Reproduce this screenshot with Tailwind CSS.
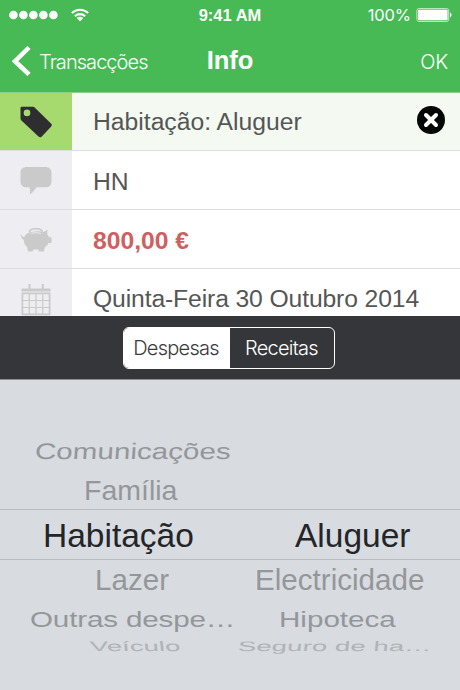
<!DOCTYPE html>
<html lang="pt">
<head>
    <meta charset="UTF-8">
    <meta name="viewport" content="width=device-width, initial-scale=1.0">
    <title>Info</title>
    <script src="https://cdn.jsdelivr.net/npm/@tailwindcss/browser@4"></script>
</head>
<body class="w-[460px] h-[690px] overflow-hidden flex flex-col bg-[#d8dbe0] font-['Liberation_Sans',Arial,sans-serif] whitespace-nowrap">

    <!-- Header -->
    <header class="h-[93px] shrink-0 bg-[#47ba55] border-b border-[#8fd088] text-white">
        <!-- Status bar -->
        <div class="h-[30px] grid grid-cols-3 items-center">
            <div class="flex items-center pl-[9px]">
                <svg class="w-[49px] h-[10px]" viewBox="0 0 49 10" fill="currentColor">
                    <circle cx="4.4" cy="5" r="4.3"/>
                    <circle cx="14.4" cy="5" r="4.3"/>
                    <circle cx="24.4" cy="5" r="4.3"/>
                    <circle cx="34.4" cy="5" r="4.3"/>
                    <circle cx="44.4" cy="5" r="4.3"/>
                </svg>
                <svg class="w-[18px] h-[14px] ml-[13px]" viewBox="0 0 18 14" fill="none" stroke="currentColor" stroke-width="2.1">
                    <path d="M.9 5.1a11.5 11.5 0 0 1 16.2 0M3.9 8.2a7.2 7.2 0 0 1 10.2 0"/>
                    <path d="M5.8 10.1a4.6 4.6 0 0 1 6.4 0L9 13.4z" fill="currentColor" stroke="none"/>
                </svg>
            </div>
            <div class="text-center text-[16.5px] font-bold">9:41 AM</div>
            <div class="flex items-center justify-end pr-[8px]">
                <span class="font-['Inter',sans-serif] text-[16.5px] tracking-[-0.1px]">100%</span>
                <svg class="w-[36px] h-[14px] ml-[5px]" viewBox="0 0 36 14">
                    <rect x=".9" y=".6" width="31.8" height="12.8" rx="2" fill="none" stroke="#c5ecc8" stroke-width="1"/>
                    <rect x="2" y="1.7" width="29.6" height="10.6" rx="1" fill="#fff"/>
                    <path d="M34 4.6c2 .8 2 4 0 4.8z" fill="#fff"/>
                </svg>
            </div>
        </div>
        <!-- Navigation bar -->
        <div class="h-[62px] grid grid-cols-3 items-center">
            <div class="flex items-center pl-[12px]">
                <svg class="w-[19px] h-[30px]" viewBox="0 0 19 30" fill="none" stroke="currentColor" stroke-width="4.5">
                    <path d="M17 1.5 3 15.2l14 13.3"/>
                </svg>
                <span class="ml-[8px] mt-[2px] font-['Inter',sans-serif] font-light text-[20px] tracking-[-0.95px]">Transacções</span>
            </div>
            <h1 class="-mt-[2px] text-center text-[25.5px] font-bold">Info</h1>
            <div class="pr-[12px] mt-[2px] text-right font-['Inter',sans-serif] font-light text-[20px] tracking-[-0.2px]">OK</div>
        </div>
    </header>

    <!-- Transaction fields -->
    <main class="h-[223px] shrink-0 overflow-hidden bg-white text-[24.7px] text-[#555656]">
        <div class="h-[58px] flex items-center bg-[#f4faf1] border-b border-[#dbe0d8]">
            <div class="w-[72px] h-full flex items-center justify-center bg-[#a6da6e]">
                <svg class="w-[32px] h-[32px]" viewBox="0 0 32 32" fill="#2e2e30">
                    <path fill-rule="evenodd" d="M2 .8h10.5c1 0 1.7.2 2.4.9l16.100 15.800c1.100 1.100 1.100 2.100 0 3.200l-9.200 9.800c-1 1.100-2.200 1.100-3.300.1L1.400 14.400C.8 13.800.5 13.200.5 12.300V2.200C.5 1.200 1 .8 2 .8zM7 3.600a3.300 3.300 0 1 0 0 6.600 3.300 3.300 0 0 0 0-6.600z"/>
                </svg>
            </div>
            <span class="ml-[21px] grow">Habitação: Aluguer</span>
            <svg class="w-[28px] h-[28px] mr-[15px] -mt-[3px]" viewBox="0 0 28 28">
                <circle cx="14" cy="14" r="14" fill="#050705"/>
                <path d="M9 9 19 19M19 9 9 19" stroke="#fff" stroke-width="4" stroke-linecap="round"/>
            </svg>
        </div>
        <div class="h-[59px] flex items-center bg-white border-b border-[#dcdddf]">
            <div class="w-[72px] h-full flex items-center justify-center bg-[#eeedf2]">
                <svg class="w-[32px] h-[30px] mt-[2px]" viewBox="0 0 32 30" fill="#cacacb">
                    <path d="M6.5 1h19c3.6 0 6 2.2 6 5.5v9c0 3.6-2.4 5.8-6 5.8H16.5C14.5 24 12.500 26.500 9.800 28.600c.4-2.300.3-4.800-.4-7.300H6.500c-3.600 0-6-2.200-6-5.800v-9C.5 3.200 2.900 1 6.500 1z"/>
                </svg>
            </div>
            <span class="ml-[21px] mt-[3px]">HN</span>
        </div>
        <div class="h-[59px] flex items-center bg-white border-b border-[#dcdddf]">
            <div class="w-[72px] h-full flex items-center justify-center bg-[#eeedf2]">
                <svg class="w-[32px] h-[24px] mt-[2px]" viewBox="0 0 32 24" fill="#cacacb">
                    <path d="M9.500 4.200C9.500.2 20.500-.8 22.500 3.800" fill="none" stroke="#cacacb" stroke-width="1.700"/>
                    <path d="M7 5.800C10 3.200 19 2.600 23 4.200l4.500-2.400-.4 4.400c1 1 1.500 2 1.900 3.100h2.600v5.600h-3c-.9 1.900-2.200 3.300-3.900 4.400l-.7 4.300h-5l-.7-2.200h-4.900l-.7 2.200H8l-1-4.700C4.800 17 3.800 14.600 3.700 11.800 1.800 11 .7 8.800.4 5.800c1 1.900 2.100 3.100 3.700 3.400C4.700 7.900 5.700 6.700 7 5.800z"/>
                    <path d="M11 5.600c3-1.200 7-1.200 10 0" fill="none" stroke="#e3e2e6" stroke-width="1.200"/>
                </svg>
            </div>
            <span class="ml-[21px] mt-[3px] font-bold text-[#cf605f]">800,00 €</span>
        </div>
        <div class="h-[59px] flex items-center bg-white">
            <div class="w-[72px] h-full flex items-center justify-center bg-[#eeedf2]">
                <svg class="w-[30px] h-[32px] mt-[2px]" viewBox="0 0 30 32" fill="none" stroke="#cacacb">
                    <path d="M8.500 0v5M21.800 0v5" stroke-width="2"/>
                    <path d="M.5 4.500h29v3H.5z" fill="#cacacb" stroke="none"/>
                    <path d="M1.400 9.300h27.200v21H1.400z" stroke-width="1.800"/>
                    <path d="M8.200 10v20M15 10v20M21.800 10v20M2 16.500h26M2 23.500h26" stroke-width="1.200"/>
                </svg>
            </div>
            <span class="ml-[21px] tracking-[-0.12px]">Quinta-Feira 30 Outubro 2014</span>
        </div>
    </main>

    <!-- Segmented control -->
    <div class="h-[64px] shrink-0 flex items-center justify-center bg-[#35363a] border-b border-[#8d8f93]">
        <div class="w-[212px] h-[42px] mr-[2px] flex rounded-[6px] border-[1.5px] border-white overflow-hidden font-['Inter',sans-serif] font-light text-[20px] tracking-[-0.75px]">
            <button class="w-[106px] pr-[2px] bg-white text-[#3a3b3e]">Despesas</button>
            <button class="grow pr-[1px] text-white">Receitas</button>
        </div>
    </div>

    <!-- Category picker -->
    <section class="grow pt-[53px] text-[29.6px]/[36px] text-[#94979a]">
        <div class="h-[37px] flex items-center">
            <span class="ml-[35px] -mt-[2px] scale-y-[0.76] -skew-x-3">Comunicações</span>
        </div>
        <div class="h-[39px] flex items-center text-[28.5px]">
            <span class="ml-[84px]">Família</span>
        </div>
        <div class="h-[51px] grid grid-cols-2 items-center border-y border-[#b9bcc2] text-[33.5px] text-[#232528]">
            <span class="pl-[43px] mt-[2px]">Habitação</span>
            <span class="pl-[65px] mt-[2px]">Aluguer</span>
        </div>
        <div class="h-[40px] grid grid-cols-2 items-center">
            <span class="pl-[95px]">Lazer</span>
            <span class="pl-[25px]">Electricidade</span>
        </div>
        <div class="h-[38px] grid grid-cols-2 items-center">
            <span class="pl-[30px] -mt-[1px] scale-y-[0.76] tracking-[-0.15px]">Outras despe…</span>
            <span class="pl-[49px] -mt-[1px] scale-y-[0.76]">Hipoteca</span>
        </div>
        <div class="h-[18px] grid grid-cols-2 items-center text-[27.5px]/[18px] text-[#b0b3b7]">
            <span class="pl-[90px] -mt-[2px] scale-y-50 skew-x-3">Veículo</span>
            <span class="pl-[8px] -mt-[2px] scale-y-50 -skew-x-3 tracking-[0.1px]">Seguro de ha…</span>
        </div>
    </section>

</body>
</html>
